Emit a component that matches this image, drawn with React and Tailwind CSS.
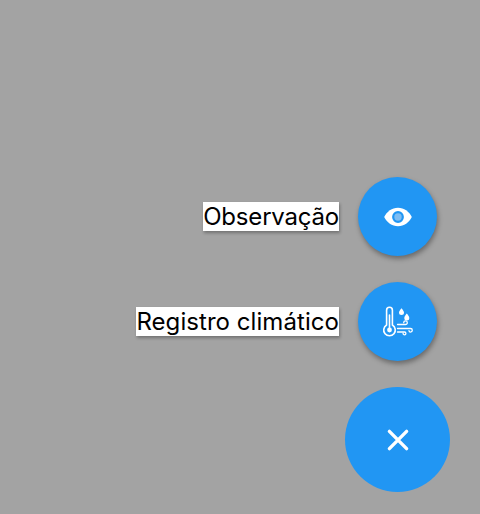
function Eye() {
  return (
    <svg width="30" height="30" viewBox="0 0 30 30" fill="none">
      <path fill="#fff" d="M15 5.700C8.900 5.700 3.900 9.500 1.200 15c2.700 5.500 7.700 9.300 13.800 9.300S26.100 20.500 28.800 15C26.100 9.500 21.100 5.700 15 5.700Z" />
      <circle cx="15" cy="15" r="4.800" fill="#7fbdf2" stroke="#2196f3" strokeWidth="2.200" />
    </svg>
  );
}

function Climate() {
  return (
    <svg width="32" height="32" viewBox="0 0 32 32" fill="none" stroke="#fff" strokeLinecap="round" strokeLinejoin="round">
      <path strokeWidth="1.600" d="M4.600 19V4.200a2.900 2.900 0 0 1 5.800 0V19a5.800 5.800 0 1 1-5.800 0Z" />
      <circle cx="7.500" cy="24" r="2.400" fill="#fff" stroke="none" />
      <path strokeWidth="1.600" d="M7.500 22.500V9" />
      <path fill="#fff" stroke="none" d="M19.500 2.200c1.100 1.500 2.500 2.800 2.500 4.300a2.500 2.500 0 0 1-5 0c0-1.500 1.400-2.800 2.500-4.300ZM24.800 7.500c1.100 1.500 2.500 2.900 2.500 4.400a2.500 2.500 0 0 1-5 0c0-1.500 1.400-2.900 2.500-4.400Z" />
      <path strokeWidth="1.300" d="M15.500 18.500h8a1.800 1.800 0 1 0-1.800-1.800M15.500 22.500h13a1.800 1.800 0 0 1 0 3.600 1.500 1.500 0 0 1-1.500-1.400M15.500 26h7a1.400 1.400 0 1 1-1.400 1.400" />
    </svg>
  );
}

function Row({ label, tracking, children }) {
  return (
    <div className="flex items-center mr-[13px]">
      <span className={`bg-white text-black text-[24px] leading-[29px] shadow-[1px_2px_3px_rgba(0,0,0,0.3)] font-['Inter','Liberation_Sans',sans-serif] ${tracking}`}>
        {label}
      </span>
      <button className="ml-[19px] w-[79px] h-[79px] rounded-full bg-[#2196f3] flex items-center justify-center shadow-[1px_3px_5px_rgba(0,0,0,0.35)]">
        {children}
      </button>
    </div>
  );
}

export default function App() {
  return (
    <div className="w-[480px] h-[514px] bg-[#a3a3a3] flex flex-col items-end justify-end gap-[26px] pr-[30px] pb-[22px] overflow-hidden">
      <Row label="Observação" tracking="tracking-[-0.2px]"><Eye /></Row>
      <Row label="Registro climático" tracking="tracking-[0.06px]"><Climate /></Row>
      <button className="w-[105px] h-[105px] rounded-full bg-[#2196f3] flex items-center justify-center">
        <svg width="24" height="24" viewBox="0 0 24 24" fill="none" stroke="#fff" strokeWidth="3.400" strokeLinecap="round">
          <path d="M3.400 3.400l17.200 17.200M20.600 3.400L3.400 20.600" />
        </svg>
      </button>
    </div>
  );
}
